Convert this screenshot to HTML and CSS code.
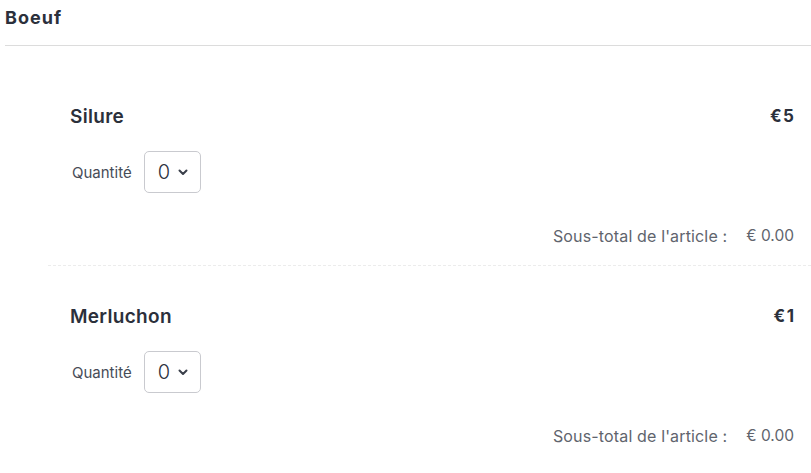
FILE: index.html
```html
<!DOCTYPE html>
<html lang="fr">
<head>
<meta charset="utf-8">
<link rel="stylesheet" href="styles.css">
</head>
<body>
<div class="page">
  <h2 class="category">Boeuf</h2>
  <div class="items">
    <div class="item">
      <div class="item-head">
        <span class="item-name">Silure</span>
        <span class="item-price">€5</span>
      </div>
      <div class="qty-row">
        <span class="qty-label">Quantité</span>
        <div class="select">
          <span class="select-value">0</span>
          <svg class="chev" width="10" height="7" viewBox="0 0 10 7"><path d="M1.5 1.5 L5 5 L8.5 1.5" fill="none" stroke="#3a3f4a" stroke-width="2" stroke-linecap="round" stroke-linejoin="round"/></svg>
        </div>
      </div>
      <div class="subtotal">
        <span class="sub-label">Sous-total de l'article :</span>
        <span class="sub-value">€ 0.00</span>
      </div>
    </div>
    <div class="item">
      <div class="item-head">
        <span class="item-name">Merluchon</span>
        <span class="item-price">€1</span>
      </div>
      <div class="qty-row">
        <span class="qty-label">Quantité</span>
        <div class="select">
          <span class="select-value">0</span>
          <svg class="chev" width="10" height="7" viewBox="0 0 10 7"><path d="M1.5 1.5 L5 5 L8.5 1.5" fill="none" stroke="#3a3f4a" stroke-width="2" stroke-linecap="round" stroke-linejoin="round"/></svg>
        </div>
      </div>
      <div class="subtotal">
        <span class="sub-label">Sous-total de l'article :</span>
        <span class="sub-value">€ 0.00</span>
      </div>
    </div>
  </div>
</div>
</body>
</html>
```
FILE: styles.css
```css
html, body {
  margin: 0;
  padding: 0;
  background: #fff;
}
body {
  font-family: Inter, "Noto Sans", sans-serif;
  color: #2b303b;
  overflow: hidden;
}
.page {
  padding-left: 5px;
}
.category {
  margin: 0;
  padding: 6px 0 15px 0;
  font-size: 18px;
  letter-spacing: 1px;
  line-height: 24px;
  font-weight: 700;
  color: #2b303b;
  border-bottom: 1px solid #dcdcdc;
}
.items {
  margin-left: 43px;
  padding-top: 20px;
}
.item {
  padding: 38px 17px 19px 22px;
  border-bottom: 1px dashed #ececec;
}
.item:last-child {
  border-bottom: none;
}
.item-head {
  display: flex;
  justify-content: space-between;
  align-items: center;
  height: 24px;
}
.item-name {
  font-size: 19px;
  letter-spacing: 0.3px;
  font-weight: 600;
  color: #2b303b;
}
.item-price {
  font-size: 17px;
  letter-spacing: 1.5px;
  margin-right: -1.5px;
  font-weight: 700;
  color: #2b303b;
}
.qty-row {
  display: flex;
  align-items: center;
  gap: 12px;
  margin-top: 23px;
  padding-left: 2px;
}
.qty-label {
  font-size: 15px;
  color: #474c57;
}
.select {
  box-sizing: border-box;
  width: 57px;
  height: 42px;
  border: 1px solid #c9cacf;
  border-radius: 5px;
  display: flex;
  align-items: center;
  padding-left: 13px;
  gap: 8px;
}
.select-value {
  font-size: 20px;
  font-weight: 300;
  color: #2b303b;
}
.chev {
  display: block;
  margin-top: 1px;
}
.subtotal {
  display: flex;
  justify-content: flex-end;
  gap: 19px;
  margin-top: 33px;
  font-size: 16px;
  line-height: 20px;
  color: #60646d;
}
.sub-label {
  letter-spacing: 0.15px;
}
.sub-value {
  font-size: 15.5px;
}
```
